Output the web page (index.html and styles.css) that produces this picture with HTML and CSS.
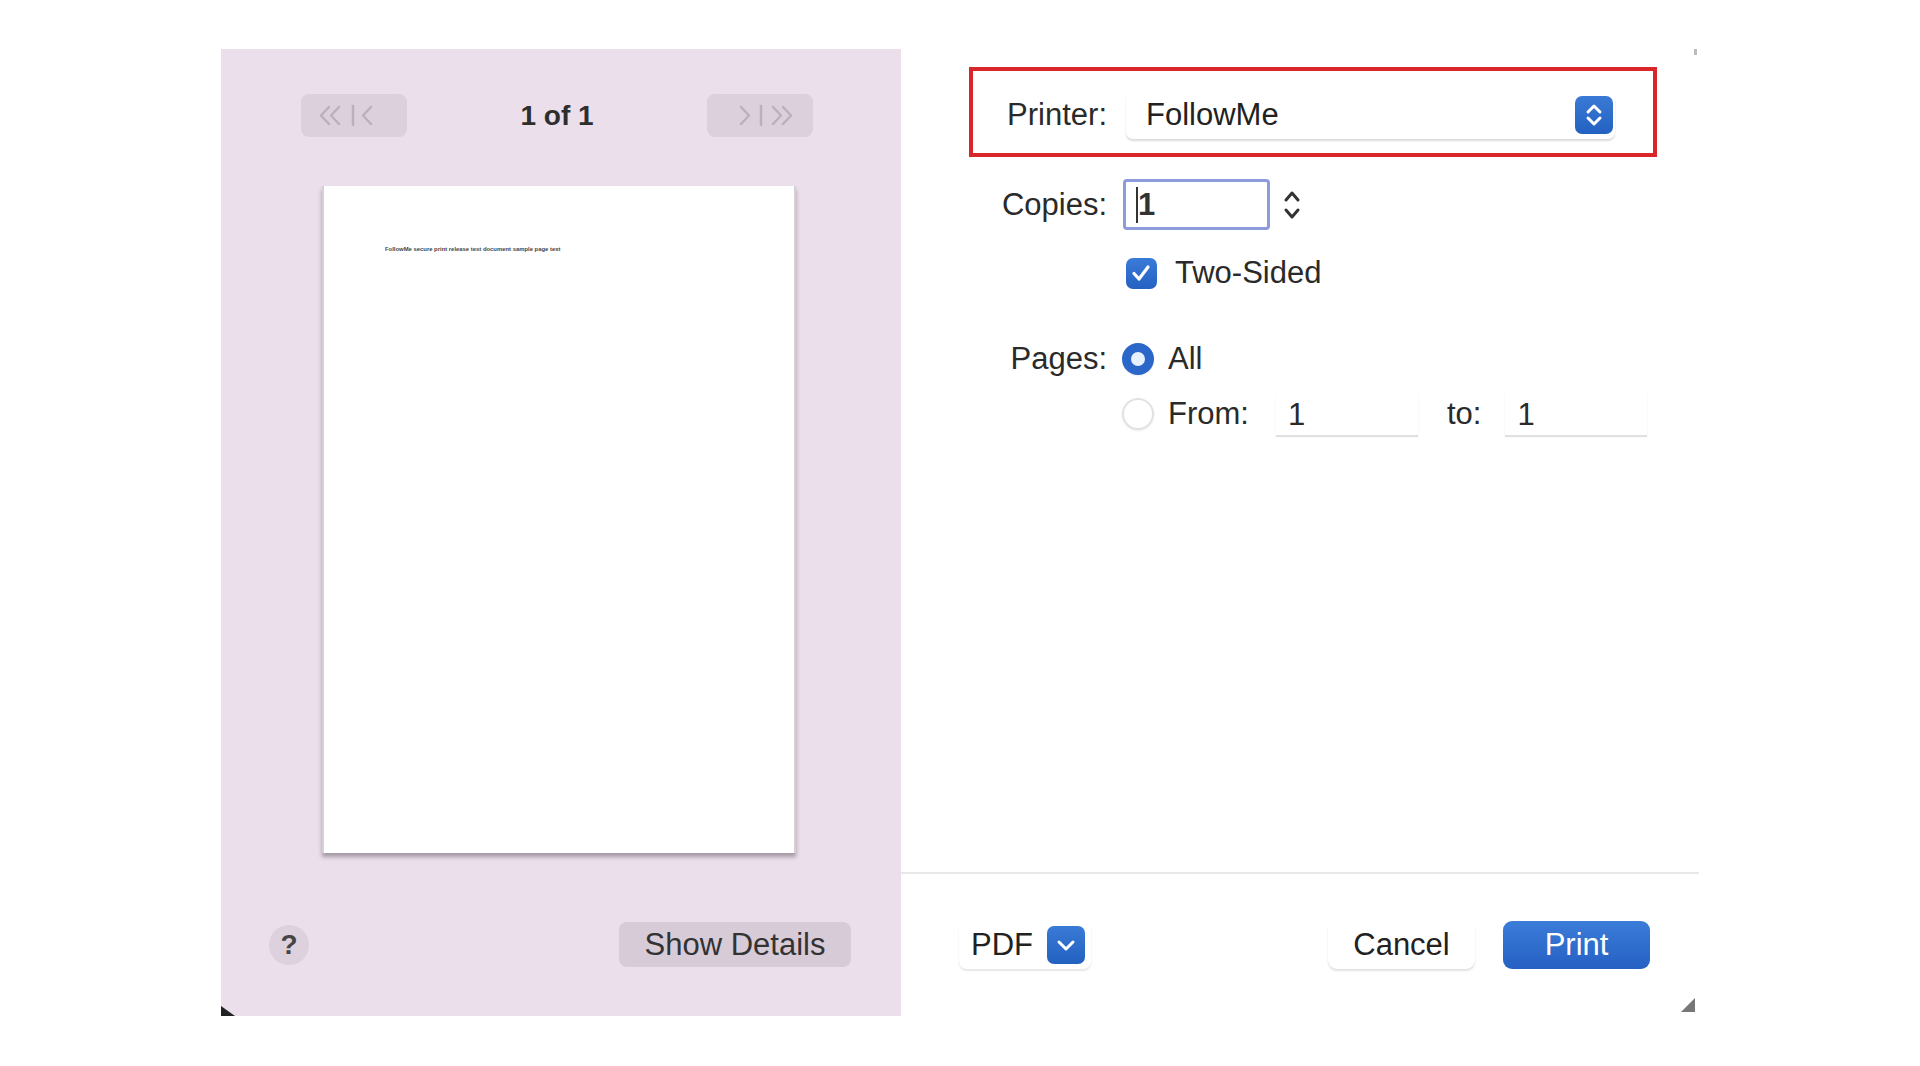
FILE: index.html
```html
<!DOCTYPE html>
<html lang="en">
<head>
  <meta charset="UTF-8">
  <meta name="viewport" content="width=device-width, initial-scale=1.0">
  <title>Print</title>
  <link rel="stylesheet" href="styles.css">
</head>
<body>
  <div class="dialog">
    <!-- preview side -->
    <div class="preview">
      <div class="pager">
        <div class="pager-btn">
          <svg width="106" height="43" viewBox="0 0 106 43">
            <path d="M28 13 L20 21.5 L28 30 M38 13 L30 21.5 L38 30" />
            <path d="M52 12 L52 31" />
            <path d="M70 13 L62 21.5 L70 30" />
          </svg>
        </div>
        <div class="pager-label">1 of 1</div>
        <div class="pager-btn">
          <svg width="106" height="43" viewBox="0 0 106 43">
            <path d="M34 13 L42 21.5 L34 30" />
            <path d="M54 12 L54 31" />
            <path d="M66 13 L74 21.5 L66 30 M76 13 L84 21.5 L76 30" />
          </svg>
        </div>
      </div>

      <div class="page-sheet">
        <div class="page-line">FollowMe secure print release test document sample page text</div>
      </div>

      <div class="preview-footer">
        <button class="help-btn">?</button>
        <button class="soft-btn">Show Details</button>
      </div>
    </div>

    <!-- settings side -->
    <div class="settings">
      <div class="row printer-row">
        <div class="row-label">Printer:</div>
        <div class="popup">
          <span class="popup-text">FollowMe</span>
          <span class="blue-knob">
            <svg width="38" height="38" viewBox="0 0 38 38">
              <path d="M13 16 L19 10 L25 16 M13 22 L19 28 L25 22" />
            </svg>
          </span>
        </div>
      </div>

      <div class="row copies-row">
        <div class="row-label">Copies:</div>
        <div class="copies-field"><span class="caret">1</span></div>
        <svg class="stepper" width="20" height="34" viewBox="0 0 20 34">
          <path d="M4 12 L10 5 L16 12 M4 22 L10 29 L16 22" />
        </svg>
      </div>

      <div class="row check-row">
        <span class="checkbox">
          <svg width="30" height="30" viewBox="0 0 30 30">
            <path d="M8 15.5 L13 21 L22 9" />
          </svg>
        </span>
        <span class="opt-text">Two-Sided</span>
      </div>

      <div class="row pages-row">
        <div class="row-label">Pages:</div>
        <span class="radio on"></span>
        <span class="opt-text">All</span>
      </div>

      <div class="row range-row">
        <span class="radio"></span>
        <span class="opt-text">From:</span>
        <div class="num-field from-field">1</div>
        <span class="opt-text to-label">to:</span>
        <div class="num-field">1</div>
      </div>

      <div class="settings-footer">
        <div class="pdf-btn">
          <span>PDF</span>
          <span class="blue-knob small">
            <svg width="38" height="38" viewBox="0 0 38 38">
              <path d="M12 16 L19 23 L26 16" />
            </svg>
          </span>
        </div>
        <div class="footer-actions">
          <button class="plain-btn">Cancel</button>
          <button class="print-btn">Print</button>
        </div>
      </div>
    </div>

    <span class="corner corner-left"></span>
    <span class="corner corner-right"></span>
    <span class="corner-dot"></span>
  </div>
</body>
</html>
```

FILE: styles.css
```css
body {
  margin: 0;
  background-color: #fff;
  font-family: "Liberation Sans", Arial, Helvetica, sans-serif;
  color: #222;
}

.dialog {
  position: relative;
  display: flex;
  width: 1478px;
  height: 967px;
  margin: 49px auto 0;
}

/* preview side */

.preview {
  display: flex;
  flex-direction: column;
  width: 680px;
  background-color: #ebdfeb;
}

.pager {
  display: flex;
  align-items: center;
  justify-content: space-between;
  height: 43px;
  margin: 45px 88px 0 80px;
}

.pager-btn {
  width: 106px;
  height: 43px;
  border-radius: 8px;
  background-color: #dcd0dc;
}

.pager-btn svg path {
  fill: none;
  stroke: #bcb0bc;
  stroke-width: 2.5;
  stroke-linecap: round;
  stroke-linejoin: round;
}

.pager-label {
  font-size: 28px;
  font-weight: bold;
  color: #2e2e2e;
}

.page-sheet {
  width: 474px;
  height: 667px;
  margin: 49px 0 0 101px;
  background-color: #fff;
  border-left: 2px solid #d6d0d6;
  border-right: 2px solid #d6d0d6;
  box-sizing: border-box;
  box-shadow: 0 4px 4px rgba(80, 70, 80, 0.45);
}

.page-line {
  margin: 60px 0 0 61px;
  width: 176px;
  font-size: 5.9px;
  font-weight: bold;
  color: #444;
  white-space: nowrap;
  overflow: hidden;
}

.preview-footer {
  display: flex;
  align-items: center;
  justify-content: space-between;
  padding: 69px 50px 0 48px;
}

.help-btn {
  width: 40px;
  height: 40px;
  border: none;
  border-radius: 50%;
  background-color: #ddd1dd;
  font-family: inherit;
  font-size: 28px;
  font-weight: bold;
  color: #444;
  padding: 0;
}

.soft-btn {
  width: 232px;
  height: 45px;
  border: none;
  border-radius: 8px;
  background-color: #d8cbd8;
  font-family: inherit;
  font-size: 31px;
  color: #333;
  padding: 0;
}

/* settings side */

.settings {
  display: flex;
  flex-direction: column;
  flex: 1;
  background-color: #fff;
}

.row {
  display: flex;
  align-items: center;
  padding-left: 72px;
  font-size: 31px;
}

.row-label {
  width: 134px;
  text-align: right;
  color: #2a2a2a;
}

.printer-row {
  box-sizing: border-box;
  height: 90px;
  margin: 18px 42px 0 68px;
  padding: 6px 0 0 0;
  border: 4px solid #d8262b;
}

.printer-row .row-label {
  margin-top: 0;
}

.popup {
  display: flex;
  align-items: center;
  justify-content: space-between;
  width: 489px;
  height: 48px;
  margin-left: 19px;
  padding: 0 2px 0 20px;
  box-sizing: border-box;
  border-radius: 7px;
  box-shadow: 0 2px 2px rgba(0, 0, 0, 0.14);
}

.popup-text {
  color: #222;
}

.blue-knob {
  display: flex;
  width: 38px;
  height: 38px;
  border-radius: 7px;
  background: linear-gradient(#3a7ad6, #2361c0);
}

.blue-knob svg path {
  fill: none;
  stroke: #fff;
  stroke-width: 3;
  stroke-linecap: round;
  stroke-linejoin: round;
}

.copies-row {
  margin-top: 22px;
  height: 51px;
}

.copies-field {
  display: flex;
  align-items: center;
  width: 147px;
  height: 51px;
  margin-left: 16px;
  padding-left: 10px;
  box-sizing: border-box;
  border: 3px solid #8d9bdc;
  border-radius: 4px;
}

.caret {
  font-weight: bold;
  color: #333;
  border-left: 2px solid #333;
}

.stepper {
  margin-left: 12px;
}

.stepper path {
  fill: none;
  stroke: #333;
  stroke-width: 3;
  stroke-linecap: round;
  stroke-linejoin: round;
}

.check-row {
  margin-top: 27px;
  height: 32px;
  padding-left: 225px;
}

.checkbox {
  display: flex;
  width: 31px;
  height: 31px;
  border-radius: 7px;
  background: linear-gradient(#3b7bd8, #2461c2);
}

.checkbox svg path {
  fill: none;
  stroke: #fff;
  stroke-width: 3.2;
  stroke-linecap: round;
  stroke-linejoin: round;
}

.opt-text {
  margin-left: 16px;
  color: #2a2a2a;
}

.check-row .opt-text {
  margin-left: 18px;
}

.pages-row {
  margin-top: 52px;
  height: 36px;
}

.radio {
  width: 32px;
  height: 32px;
  border-radius: 50%;
  box-sizing: border-box;
  border: 2px solid #e2e2e2;
  background-color: #fff;
  box-shadow: 0 1px 2px rgba(0, 0, 0, 0.08);
}

.pages-row .radio {
  margin-left: 15px;
}

.radio.on {
  border: 9px solid #2a67c8;
  background-color: #e8f2ff;
}

.pages-row .opt-text {
  margin-left: 14px;
}

.range-row {
  margin-top: 15px;
  height: 43px;
  padding-left: 221px;
}

.range-row .opt-text {
  margin-left: 14px;
}

.num-field {
  width: 142px;
  height: 43px;
  box-sizing: border-box;
  padding: 5px 0 0 12px;
  box-shadow: 0 2px 1px rgba(0, 0, 0, 0.12);
  color: #2a2a2a;
}

.from-field {
  margin-left: 27px;
}

.range-row .to-label {
  margin: 0 24px 0 29px;
}

.settings-footer {
  display: flex;
  align-items: center;
  justify-content: space-between;
  box-sizing: border-box;
  height: 144px;
  margin-top: auto;
  padding: 0 49px 0 58px;
  border-top: 2px solid #e8e8e8;
  font-size: 31px;
}

.pdf-btn {
  display: flex;
  align-items: center;
  gap: 14px;
  height: 48px;
  padding: 0 6px 0 12px;
  border-radius: 8px;
  box-shadow: 0 2px 2px rgba(0, 0, 0, 0.1);
  color: #222;
}

.footer-actions {
  display: flex;
  gap: 28px;
}

.plain-btn,
.print-btn {
  width: 147px;
  height: 48px;
  border: none;
  border-radius: 9px;
  font-family: inherit;
  font-size: 31px;
  padding: 0;
}

.plain-btn {
  background-color: #fff;
  color: #222;
  box-shadow: 0 2px 2px rgba(0, 0, 0, 0.12);
}

.print-btn {
  background: linear-gradient(#3c7cd9, #2560c2);
  color: #fff;
}

/* window resize marks */

.corner {
  position: absolute;
  bottom: 0;
  width: 0;
  height: 0;
  border-style: solid;
}

.corner-left {
  left: 0;
  border-width: 10px 0 0 14px;
  border-color: transparent transparent transparent #222;
}

.corner-right {
  right: 4px;
  bottom: 4px;
  border-width: 0 0 14px 14px;
  border-color: transparent transparent #777 transparent;
}

.corner-dot {
  position: absolute;
  top: 0;
  right: 2px;
  width: 3px;
  height: 6px;
  background-color: #bbb;
}
```
